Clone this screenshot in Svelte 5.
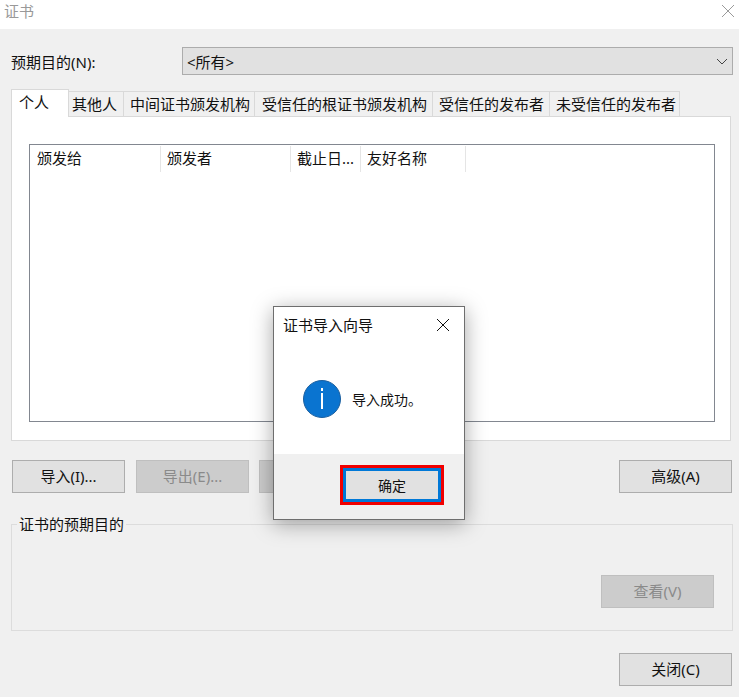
<script>
	const tabs = ['个人', '其他人', '中间证书颁发机构', '受信任的根证书颁发机构', '受信任的发布者', '未受信任的发布者'];
	const tabWidths = [58, 55, 131, 178, 117, 130];
	const columns = [
		{ label: '颁发给', width: 131 },
		{ label: '颁发者', width: 130 },
		{ label: '截止日...', width: 70 },
		{ label: '友好名称', width: 105 }
	];
</script>

<div class="window">
	<header class="titlebar">
		<span class="title">证书</span>
		<svg class="close" width="14" height="14" viewBox="0 0 14 14"><path d="M1 1l12 12M13 1L1 13" stroke="#9a9a9a" fill="none" /></svg>
	</header>

	<main class="content">
		<div class="purpose">
			<span class="purpose-label">预期目的(N):</span>
			<div class="select">
				<span>&lt;所有&gt;</span>
				<svg width="12" height="7" viewBox="0 0 12 7"><path d="M1 1l5 5 5-5" stroke="#444" fill="none" /></svg>
			</div>
		</div>

		<div class="tabs">
			{#each tabs as tab, i}
				<div class="tab" class:active={i === 0} style="width: {tabWidths[i]}px">{tab}</div>
			{/each}
		</div>
		<div class="panel">
			<div class="list">
				<div class="list-head">
					{#each columns as col}
						<div class="col" style="width: {col.width}px">{col.label}</div>
					{/each}
				</div>
			</div>
		</div>

		<div class="actions">
			<button class="btn">导入(I)...</button>
			<button class="btn off">导出(E)...</button>
			<button class="btn off remove">删除(R)</button>
			<button class="btn advanced">高级(A)</button>
		</div>

		<fieldset class="group">
			<legend>证书的预期目的</legend>
			<button class="btn off">查看(V)</button>
		</fieldset>

		<div class="footer">
			<button class="btn">关闭(C)</button>
		</div>
	</main>

	<div class="dialog">
		<div class="dialog-title">
			<span>证书导入向导</span>
			<svg width="14" height="14" viewBox="0 0 14 14"><path d="M1 1l12 12M13 1L1 13" stroke="#111" fill="none" /></svg>
		</div>
		<div class="dialog-body">
			<svg width="38" height="38" viewBox="0 0 38 38">
				<circle cx="19" cy="19" r="18.5" fill="#0a74d0" stroke="#1b5f9f" />
				<rect x="18" y="13" width="2" height="16" fill="#fff" />
				<rect x="18" y="8" width="2" height="3" fill="#fff" />
			</svg>
			<span>导入成功。</span>
		</div>
		<div class="dialog-footer">
			<div class="ok-mark">
				<button class="ok">确定</button>
			</div>
		</div>
	</div>
</div>

<style>
	:global(body) {
		margin: 0;
		background: #f0f0f0;
	}

	.window {
		position: relative;
		width: 739px;
		height: 697px;
		overflow: hidden;
		font-family: "Noto Sans", "Noto Sans CJK SC", sans-serif;
		font-size: 15px;
		color: #111;
		background: #f0f0f0;
	}

	.titlebar {
		height: 29px;
		background: #fff;
		display: flex;
		align-items: center;
		justify-content: space-between;
		padding: 0 4px;
	}

	.title {
		color: #999;
		line-height: 20px;
		margin-top: -8px;
	}

	.close {
		margin-top: -8px;
	}

	.content {
		padding: 18px 6px 0 11px;
	}

	.purpose {
		display: flex;
		align-items: center;
		height: 28px;
	}

	.purpose-label {
		flex: none;
		width: 171px;
	}

	.select {
		box-sizing: border-box;
		flex: none;
		width: 551px;
		height: 28px;
		border: 1px solid #acacac;
		background: #e1e1e1;
		display: flex;
		align-items: center;
		justify-content: space-between;
		padding: 0 4px;
	}

	.tabs {
		display: flex;
		align-items: flex-end;
		height: 27px;
		margin-top: 14px;
		position: relative;
		z-index: 1;
	}

	.tab {
		box-sizing: border-box;
		height: 25px;
		background: #f0f0f0;
		border: 1px solid #d9d9d9;
		border-left: none;
		border-bottom: none;
		padding-left: 6px;
		line-height: 25px;
		white-space: nowrap;
	}

	.tab:nth-child(2) {
		padding-left: 3px;
	}

	.tab:nth-child(4) {
		padding-left: 7px;
	}

	.tab.active {
		height: 28px;
		margin-bottom: -1px;
		background: #fff;
		border-left: 1px solid #d9d9d9;
		line-height: 25px;
		padding-left: 7px;
	}

	.panel {
		box-sizing: border-box;
		width: 720px;
		height: 325px;
		background: #fff;
		border: 1px solid #d9d9d9;
		padding: 27px 15px 18px 17px;
	}

	.list {
		box-sizing: border-box;
		height: 278px;
		width: 686px;
		border: 1px solid #828790;
		background: #fff;
		padding-top: 1px;
	}

	.list-head {
		display: flex;
		height: 26px;
	}

	.col {
		box-sizing: border-box;
		border-right: 1px solid #e5e5e5;
		padding-left: 6px;
		line-height: 24px;
		white-space: nowrap;
	}

	.col:first-child {
		padding-left: 7px;
	}

	.actions {
		display: flex;
		gap: 11px;
		margin: 19px 1px 0 1px;
	}

	.btn {
		box-sizing: border-box;
		width: 113px;
		height: 33px;
		padding: 0 0 2px;
		background: #e1e1e1;
		border: 1px solid #adadad;
		font: inherit;
		color: #111;
	}

	.btn.off {
		background: #cccccc;
		border-color: #bfbfbf;
		color: #8a8a8a;
	}

	.remove {
		margin-left: -1px;
	}

	.advanced {
		margin-left: auto;
	}

	.group {
		box-sizing: border-box;
		width: 722px;
		height: 107px;
		margin: 31px 0 0;
		position: relative;
		display: flex;
		justify-content: flex-end;
		align-items: flex-end;
		border: 1px solid #dcdcdc;
		padding: 0 18px 22px 0;
	}

	.group legend {
		position: absolute;
		top: -11px;
		left: 5px;
		background: #f0f0f0;
		padding: 0 2px;
		line-height: 20px;
	}

	.footer {
		display: flex;
		justify-content: flex-end;
		margin-top: 22px;
		width: 721px;
	}

	.dialog {
		position: absolute;
		left: 273px;
		top: 306px;
		box-sizing: border-box;
		width: 192px;
		height: 214px;
		background: #fff;
		border: 1px solid #6e6e6e;
		box-shadow: 0 4px 20px rgba(0, 0, 0, 0.35);
		display: flex;
		flex-direction: column;
	}

	.dialog-title {
		display: flex;
		justify-content: space-between;
		align-items: center;
		height: 36px;
		padding: 0 14px 0 9px;
		flex: none;
	}

	.dialog-title span {
		margin-bottom: 2px;
	}

	.dialog-body {
		flex: 1;
		display: flex;
		align-items: center;
		gap: 11px;
		padding-left: 29px;
		font-size: 14px;
	}

	.dialog-footer {
		height: 65px;
		background: #f0f0f0;
		flex: none;
		padding: 11px 0 0 66px;
		box-sizing: border-box;
	}

	.ok-mark {
		box-sizing: border-box;
		width: 104px;
		height: 40px;
		border: 3px solid #f00000;
	}

	.ok {
		box-sizing: border-box;
		display: block;
		width: 100%;
		height: 100%;
		padding: 0 0 1px;
		background: #e1e1e1;
		border: 3px solid #0078d7;
		font: inherit;
		font-size: 14px;
		color: #111;
	}
</style>
